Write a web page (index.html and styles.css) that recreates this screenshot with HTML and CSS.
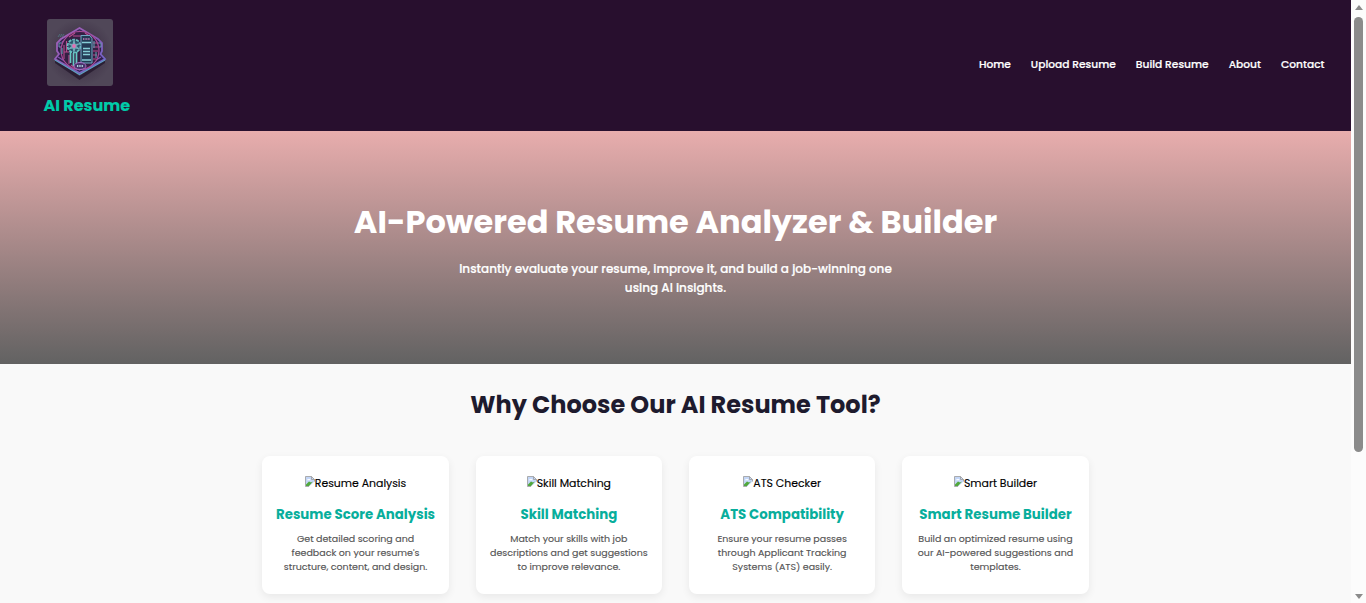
FILE: index.html
```html
<!DOCTYPE html>
<html lang="en">
<head>
<meta charset="utf-8">
<title>AI Resume</title>
<link rel="stylesheet" href="styles.css">
</head>
<body>
<svg width="0" height="0" class="defs">
  <symbol id="broken" viewBox="0 0 10 11">
    <path d="M.5.5h6L9.500 3.500v2L4 10.500H.5z" fill="#c3d6f7"/>
    <path d="M1 10V8.500L4 5.500 6 6.500 8 5.500 4 10z" fill="#51a83c"/>
    <path d="M2 4.300q0-1.300 1.300-1 .7-1 1.500 0 1 0 .9 1z" fill="#fff"/>
    <path d="M.5 10.500V.5h6L9.500 3.500v2M6.500.5v3h3M.5 10.500H4" fill="none" stroke="#9a9a9a" stroke-width=".8"/>
  </symbol>
</svg>
<div class="window">
<div class="page">
  <header class="header">
    <div class="brand">
      <svg class="logo" viewBox="0 0 66 67">
        <defs>
          <radialGradient id="plate"><stop offset="0" stop-color="#35273f"/><stop offset=".65" stop-color="#463b4e"/><stop offset="1" stop-color="#504758"/></radialGradient>
          <linearGradient id="rim" x2="1" y2="1"><stop offset="0" stop-color="#a566bd"/><stop offset=".5" stop-color="#8d58b4"/><stop offset="1" stop-color="#666bd0"/></linearGradient>
        </defs>
        <rect width="66" height="67" rx="3" fill="url(#plate)"/>
        <path d="M8 40 32.500 57 58 40v4L32.500 61 8 44z" fill="#211529" opacity=".75"/>
        <path d="M32.500 9 51 20 55 24v8l-1.500 3 4.500 5L32.500 54 8 40l4-5-2-3v-8l4-4z" fill="#30204b" stroke="url(#rim)" stroke-width="1.800"/>
        <path d="M8 41 32.500 55.500 58 41" fill="none" stroke="#5f9fc4" stroke-width="1.100"/>
        <path d="M11 38 32.500 51 54 38M32.500 12 50 23M32.500 12 15 23" fill="none" stroke="#8657b4" stroke-width="1.200"/>
        <path d="M12 24h4v4h-4zM50 24h4v4h-4z" fill="none" stroke="#71a3bd" stroke-width=".9"/>
        <circle cx="33" cy="31.500" r="19" fill="#342044" stroke="#a94b97" stroke-width="1.200"/>
        <path d="M17 26v14M19.500 22v11M22 36v9M17 33h5M46 24h4M46 28h5M46 32h5M46 36h4M46 40h3M24 46l4 3M38 14l6 4M28 14l-6 4M26 17h8" fill="none" stroke="#b64b8e" stroke-width="1.100"/>
        <path d="M47 22v7M49 33v6M15 29v6" stroke="#59a5b4"/>
        <circle cx="27" cy="27" r="6.500" fill="#2c536c" stroke="#66c1c2" stroke-width="1.700" stroke-dasharray="3 1"/>
        <path d="m27 19.500 1.500 5.500 5.500-1-4.500 3 4.500 4-5.500-1.500-1.500 5-1.500-5-5.500 1.500 4.500-4-4.500-3 5.500 1z" fill="#70a9b7"/>
        <circle cx="27" cy="27" r="1.900" fill="#e26fb3"/>
        <path d="M23.500 33v11M26.500 34v13M29.500 33v14" stroke="#65c8c3" stroke-width="1.700"/>
        <path d="M34 16.500h9l2 3V44H34z" fill="#233a54" stroke="#71a9c4"/>
        <path d="M35 23.500h9M36 29.500h7M36 32.500h7M36 35.500h7M35 41h9" stroke="#86ced6" stroke-width="1.300"/>
        <path d="M36 20h7" stroke="#d081c3" stroke-width="1.500" stroke-dasharray="1 .6"/>
        <ellipse cx="33" cy="47" rx="6" ry="3.500" fill="#47346c" stroke="#a36bc0"/>
        <path d="M30 47h6" stroke="#abd5de" stroke-width="1.800" stroke-dasharray="1 .7"/>
        <path d="m11 18 2-3m0 3 2-3m0 3 2-3" stroke="#517c83" stroke-width=".8"/>
      </svg>
      <span class="brand-name">AI Resume</span>
    </div>
    <nav class="nav">
      <a>Home</a><a>Upload Resume</a><a>Build Resume</a><a>About</a><a>Contact</a>
    </nav>
  </header>
  <section class="hero">
    <h1>AI-Powered Resume Analyzer &amp; Builder</h1>
    <p>Instantly evaluate your resume, improve it, and build a job-winning one<br>using AI insights.</p>
  </section>
  <section class="features">
    <h2>Why Choose Our AI Resume Tool?</h2>
    <div class="cards">
      <article class="card"><div class="alt"><svg><use href="#broken"/></svg>Resume Analysis</div><h3>Resume Score Analysis</h3><p>Get detailed scoring and<br>feedback on your resume's<br>structure, content, and design.</p></article>
      <article class="card"><div class="alt"><svg><use href="#broken"/></svg>Skill Matching</div><h3>Skill Matching</h3><p>Match your skills with job<br>descriptions and get suggestions<br>to improve relevance.</p></article>
      <article class="card"><div class="alt"><svg><use href="#broken"/></svg>ATS Checker</div><h3>ATS Compatibility</h3><p>Ensure your resume passes<br>through Applicant Tracking<br>Systems (ATS) easily.</p></article>
      <article class="card"><div class="alt"><svg><use href="#broken"/></svg>Smart Builder</div><h3>Smart Resume Builder</h3><p>Build an optimized resume using<br>our AI-powered suggestions and<br>templates.</p></article>
    </div>
  </section>
</div>
<div class="scrollbar"><i class="up"></i><i class="thumb"></i><i class="down"></i></div>
</div>
</body>
</html>
```
FILE: styles.css
```css
* { box-sizing: border-box; margin: 0; }
body { font-family: Poppins, Inter, sans-serif; overflow: hidden; color: #000; }
.defs { display: block; }
.window { display: flex; height: 603px; overflow: hidden; }
.page { width: 1351px; background: #f9f9f9; overflow: hidden; }
.header { height: 131px; background: #280f2e; display: flex; justify-content: space-between; padding: 19px 26.500px 0 43px; }
.brand { display: flex; flex-direction: column; align-items: flex-start; }
.logo { width: 66px; height: 67px; margin-left: 4px; display: block; }
.brand-name { color: #00cba9; font-weight: 700; font-size: 16px; line-height: 20px; margin-top: 10px; margin-left: .4px; white-space: nowrap; -webkit-text-stroke: .15px; }
.nav { display: flex; gap: 20px; height: 18px; margin-top: 37px; color: #fff; font-weight: 500; font-size: 10.670px; line-height: 18px; white-space: nowrap; -webkit-text-stroke: .2px; }
.hero { height: 233px; background: linear-gradient(#e8adad, #626262); color: #fff; text-align: center; padding-top: 66px; white-space: nowrap; }
.hero h1 { font-size: 32px; line-height: 50px; font-weight: 700; }
.hero p { font-size: 12px; line-height: 19px; font-weight: 500; margin-top: 12px; -webkit-text-stroke: .2px; }
.features { text-align: center; padding-top: 22px; }
.features h2 { font-size: 24px; line-height: 38px; color: #1e1b2e; font-weight: 700; }
.cards { display: grid; grid-template-columns: repeat(4, 186.670px); gap: 26.670px; justify-content: center; margin-top: 32px; }
.card { height: 138px; background: #fff; border-radius: 8px; box-shadow: 0 3px 8px rgba(0,0,0,.07); padding-top: 19px; white-space: nowrap; }
.alt { font-size: 10.900px; line-height: 18px; height: 16px; display: flex; justify-content: center; -webkit-text-stroke: .15px; }
.alt svg { width: 10px; height: 11px; margin-top: 1px; }
.card h3 { color: #08ae9c; font-size: 13.330px; line-height: 20px; margin-top: 14px; font-weight: 700; }
.card p { color: #555; font-size: 9.470px; line-height: 14px; margin-top: 7px; -webkit-text-stroke: .15px; }
.scrollbar { width: 15px; background: #fcfcfc; display: flex; flex-direction: column; align-items: center; }
.up, .down { width: 0; height: 0; border: 4.500px solid transparent; border-top: 0; border-bottom: 5px solid #8b8b8b; margin-top: 5px; }
.thumb { width: 9px; height: 435px; border-radius: 5px; background: #8b8b8b; margin-top: 7px; }
.down { border-bottom: 0; border-top: 5px solid #8b8b8b; margin-top: 142px; }
```
